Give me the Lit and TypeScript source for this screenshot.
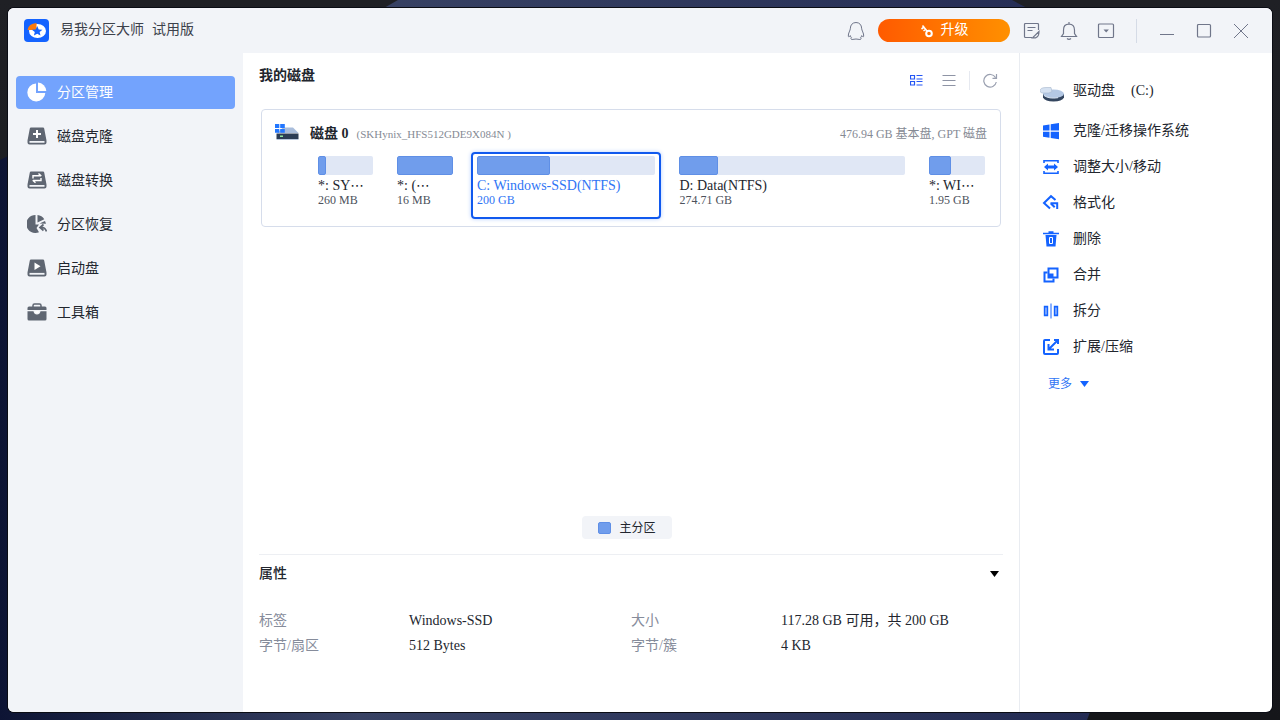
import { LitElement, html, svg, css } from "lit";
import { customElement, state } from "lit/decorators.js";
import { classMap } from "lit/directives/class-map.js";

const icon = (w: number, h: number, body: unknown) =>
  html`<svg width=${w} height=${h} viewBox="0 0 ${w} ${h}" fill="none" aria-hidden="true">${body}</svg>`;

const diskBody = svg`<path d="M4 .5h12q1 0 1.2 1l2 10.500q.3 1 .3 2v1.500q0 2-2 2H2.500q-2 0-2-2V14q0-1 .3-2l2-10.500Q3 .5 4 .5z" fill="#5f6672"/><path d="M2.500 14.800h15" stroke="#f2f4f8" stroke-width="1.800"/>`;

const navIcons: Record<string, unknown> = {
  manage: icon(20, 20, svg`<path d="M9 1.500A9 9 0 1 0 18.300 11H9z" fill="#fff"/><path d="M11 .5v8.500h8.300A9 9 0 0 0 11 .5z" fill="#fff"/>`),
  clone: icon(20, 18, svg`${diskBody}<path d="M10 3v8M6 7h8" stroke="#fff" stroke-width="2"/>`),
  convert: icon(20, 18, svg`${diskBody}<path d="M6 7.500V4.800H14M11.500 2.500L14.300 5M14 7V9.500H6M8.500 11.700L5.700 9.300" stroke="#fff" stroke-width="1.400"/>`),
  recover: icon(20, 20, svg`<path d="M8.500 1A9 9 0 1 0 12 18.200L9.500 14 12 10.500H8.500z" fill="#5f6672"/><path d="M10.500 1v7.500l6.800-3.300A9 9 0 0 0 10.500 1zM18 7l-5.500 2.600L19 9.800z" fill="#5f6672"/><path d="M16.500 10.500L13 13.500l3.500 3M13.500 13.500q4.500-.5 6 4" stroke="#5f6672" stroke-width="1.700"/>`),
  boot: icon(20, 18, svg`${diskBody}<path d="M7.500 3.500v7.500L13.500 7.200z" fill="#fff"/>`),
  tools: icon(20, 18, svg`<path d="M6 4V2.500Q6 1 7.500 1h5Q14 1 14 2.500V4" stroke="#5f6672" stroke-width="1.500"/><path d="M2 3.500h16q1.500 0 1.500 1.500v2H.5V5Q.5 3.500 2 3.500zM.5 8.200H6.500q.7 3.300 3.500 3.300t3.500-3.300h6V16q0 1.500-1.500 1.500H2Q.5 17.500.5 16z" fill="#5f6672"/><path d="M7.800 8.200h4.400q-.4 2-2.200 2t-2.200-2z" fill="#fff"/>`),
};

const B = "#1463ff";
const opIcons: Record<string, unknown> = {
  os: icon(18, 18, svg`<path d="M1 3.500l6.500-1v6H1zM8.700 2.300L17 1v7.500H8.700zM1 9.700h6.500v6l-6.500-1zM8.700 9.700H17v7.500l-8.300-1.300z" fill=${B}/>`),
  resize: icon(18, 18, svg`<path d="M2 5V2.800h14V5M2 13v2.200h14V13" stroke=${B} stroke-width="1.600"/><path d="M2 9l4-3.600v2h6v-2l4 3.600-4 3.600v-2H6v2z" fill=${B}/>`),
  format: icon(18, 18, svg`<path d="M13.500 6L9 2.200 2 9l6 5.500M8.500 9.300h6.700v5.700M8.700 9.300l4 4" stroke=${B} stroke-width="2"/>`),
  remove: icon(18, 18, svg`<path d="M1 3.500h16M6.500 2h5" stroke=${B} stroke-width="1.600"/><path d="M3.500 5h11l-1 11.500h-9z" fill=${B}/><path d="M7.500 7.500h3v6h-3z" stroke="#fff"/>`),
  merge: icon(18, 18, svg`<path d="M6.500 2.500h9v9h-9z" stroke=${B} stroke-width="2"/><path d="M5.500 6.500h-3v9h9v-3" stroke=${B} stroke-width="2"/><path d="M6.500 7.500h5v4h-5z" fill=${B}/>`),
  split: icon(18, 18, svg`<path d="M2.700 4.700h2.600v8.600H2.700zM12.700 4.700h2.600v8.600h-2.600z" stroke=${B} stroke-width="1.800"/><path d="M9 1.500v15" stroke=${B} stroke-width="1"/>`),
  extend: icon(18, 18, svg`<path d="M8 2H3Q2 2 2 3v12q0 1 1 1h12q1 0 1-1v-4M12 2h4v4" stroke=${B} stroke-width="2"/><path d="M15.500 2.500L7 11M6.500 6v5.500H12" stroke=${B} stroke-width="2"/>`),
};

const logo = icon(25, 23, svg`
  <rect width="25" height="23" rx="4" fill="#1463ff"/>
  <ellipse cx="13.500" cy="12" rx="8.500" ry="7" fill="#fff"/>
  <path d="M3.500 11Q4.500 4.500 12.500 4v7z" fill="#ff7a0a"/>
  <path d="M13.200 7l1.500 3.400 3.800.3-2.900 2.400.9 3.500-3.300-1.900-3.300 1.900.9-3.500-2.900-2.400 3.800-.3z" fill="#1463ff"/>`);

const diskIcon = icon(24, 18, svg`
  <path d="M8 4.500h10l5.500 5.500H2z" fill="#a9bddb"/><rect x="1.500" y="10.500" width="22" height="5.500" fill="#2c3d55"/>
  <path d="M1.500 16.500h22" stroke="#b9c7dc"/><path d="M5 13.300h3" stroke="#8ee8a4" stroke-width="1.500"/>
  <path d="M0 1h4.300v4H0zM5.200 1h4.600v4H5.200zM0 5.900h4.300v3.900H0zM5.200 5.900h4.600v3.900H5.200z" fill="#2377ff"/>`);

const driveIcon = icon(24, 16, svg`
  <path d="M3 8h21v3.500q-2 4-10.500 4T3 11.500z" fill="#34465f"/><ellipse cx="13.500" cy="7.700" rx="10.500" ry="4.300" fill="#b4c8e4"/>
  <path d="M4 9.500q5 3.600 14 2.200" stroke="#dce6f4"/><path d="M0 4.500Q.5 1.500 6 1.500h5l1 4-3 1.500H2Q0 6.500 0 4.500z" fill="#d5e1f1" stroke="#a6b7cd" stroke-width=".6"/>`);

const G = "#70768a";
const chrome = {
  support: icon(18, 20, svg`<path d="M9 1.500c-3.600 0-5.600 2.600-5.600 5.700 0 2.300-2.400 5-2.100 8 .1.800 1 .9 2-.6.2 1 .6 1.700 1.200 2.200-.8.500-.8 1.700.6 1.700 1.500 0 2.200-.5 3.900-.5s2.400.5 3.900.5c1.400 0 1.400-1.200.6-1.700.6-.5 1-1.200 1.200-2.200 1 1.500 1.900 1.400 2 .6.300-3-2.100-5.700-2.100-8C14.600 4.100 12.600 1.500 9 1.500z" stroke=${G}/>`),
  feedback: icon(18, 18, svg`<path d="M15.500 8V2.500q0-1-1-1h-12q-1 0-1 1v12q0 1 1 1H9M4.500 5.500h8M4.500 8.500h5" stroke=${G} stroke-width="1.200"/><path d="M16 9.500L9.500 15.800h3Q16 15 16 9.500z" stroke=${G} stroke-width="1.200"/>`),
  bell: icon(18, 20, svg`<path d="M9 1v2M1.500 15.500h15L14.500 12.500V9Q14.500 3.200 9 3.200T3.500 9v3.500zM7 17.500q2 1.800 4 0" stroke=${G} stroke-width="1.200"/>`),
  menu: icon(18, 18, svg`<rect x="1.500" y="2" width="15" height="13.500" rx="1" stroke=${G} stroke-width="1.200"/><path d="M6.500 7.500h5.400L9.200 10.500z" fill=${G}/>`),
  min: icon(18, 18, svg`<path d="M2 12.500h14" stroke=${G}/>`),
  max: icon(18, 18, svg`<rect x="2.500" y="2.500" width="13" height="12.500" rx="1" stroke=${G} stroke-width="1.200"/>`),
  close: icon(18, 18, svg`<path d="M2 2l14 14M16 2L2 16" stroke=${G}/>`),
  key: icon(14, 14, svg`<circle cx="9" cy="9.500" r="2.800" stroke="#fff" stroke-width="2"/><path d="M7.200 7.200L2.500 1.500M1.500 5l3-2.300M3.500 7l2.500-2" stroke="#fff" stroke-width="1.600"/>`),
  grid: icon(14, 14, svg`<path d="M.5 2.500h4V6h-4zM.5 8.500h4V12h-4zM6.500 2.500h6M6.500 6h6M6.500 8.500h6M6.500 12h6" stroke="#2456f5" stroke-width="1.200"/>`),
  list: icon(14, 14, svg`<path d="M.5 2.500h13M.5 7.500h13M.5 12.500h13" stroke="#8e94a5"/>`),
  refresh: icon(16, 16, svg`<path d="M13.500 5.500A6.300 6.300 0 1 0 14.300 10M14.500 2v4.300H10.500" stroke="#9aa0b0" stroke-width="1.200"/>`),
};

const NAV = [
  ["manage", "分区管理"],
  ["clone", "磁盘克隆"],
  ["convert", "磁盘转换"],
  ["recover", "分区恢复"],
  ["boot", "启动盘"],
  ["tools", "工具箱"],
];

const PARTS = [
  { name: "*: SY", cut: true, size: "260 MB", used: 15 },
  { name: "*: (", cut: true, size: "16 MB", used: 100 },
  { name: "C: Windows-SSD(NTFS)", cut: false, size: "200 GB", used: 41 },
  { name: "D: Data(NTFS)", cut: false, size: "274.71 GB", used: 17 },
  { name: "*: WI", cut: true, size: "1.95 GB", used: 39 },
];

const OPS = [
  ["os", "克隆/迁移操作系统"],
  ["resize", "调整大小/移动"],
  ["format", "格式化"],
  ["remove", "删除"],
  ["merge", "合并"],
  ["split", "拆分"],
  ["extend", "扩展/压缩"],
];

@customElement("app-root")
export class AppRoot extends LitElement {
  @state() private page = "manage";
  @state() private selected = 2;

  static styles = css`
    :host {
      display: flex;
      box-sizing: border-box;
      min-height: 100vh;
      padding: 8px;
      font: 14px/20px "Liberation Serif", "Noto Sans CJK SC", serif;
      color: #22262e;
      background:
        url("data:image/svg+xml,%3Csvg xmlns='http://www.w3.org/2000/svg' viewBox='0 0 1280 720' preserveAspectRatio='none'%3E%3Cdefs%3E%3ClinearGradient id='g'%3E%3Cstop stop-color='%230d1434'/%3E%3Cstop offset='.33' stop-color='%23384264'/%3E%3Cstop offset='1' stop-color='%23242c54'/%3E%3C/linearGradient%3E%3C/defs%3E%3Cpath d='M398 0L384 8Q200 60 0 160V720H1087L1090 712L1027 8L1012 0Z' fill='url(%23g)'/%3E%3C/svg%3E") 0 0 / 100% 100% no-repeat,
        linear-gradient(#1f2025, #15161a);
    }
    * { box-sizing: border-box; }
    button {
      font: inherit;
      color: inherit;
      background: none;
      border: 0;
      padding: 0;
      margin: 0;
      text-align: left;
      cursor: pointer;
    }
    svg { display: block; flex: none; }
    h1, h2, h3, dl, dd, dt, p, ul { margin: 0; padding: 0; font-size: 14px; }
    h1 { font-weight: 400; }
    ul { list-style: none; }
    .window {
      flex: 1;
      display: flex;
      flex-direction: column;
      border-radius: 6px;
      overflow: hidden;
      background: #fff;
      box-shadow: 0 0 0 1px #0a0c14;
    }
    .titlebar {
      display: flex;
      align-items: center;
      height: 45px;
      padding: 0 19px 0 16px;
      background: #f2f4f8;
    }
    .brand { display: flex; align-items: center; gap: 11px; flex: 1; }
    .brand h1 { display: flex; gap: 8px; padding-bottom: 2px; color: #3c414b; }
    .tools { display: flex; align-items: center; gap: 10px; }
    .controls { display: flex; align-items: center; gap: 13px; }
    .tool { width: 24px; height: 24px; display: grid; place-items: center; }
    .upgrade {
      display: flex;
      align-items: center;
      justify-content: center;
      gap: 7px;
      width: 132px;
      height: 23px;
      border-radius: 12px;
      color: #fff;
      background: linear-gradient(90deg, #ff5a00, #ff9000);
    }
    .upgrade span { padding-bottom: 2px; }
    .bar { width: 1px; height: 24px; background: #d5dbe6; }
    .controls .bar { margin: 0 5px; }
    .body { flex: 1; display: flex; }
    .side {
      width: 235px;
      padding: 23px 8px;
      background: #f2f4f8;
    }
    .side ul { display: grid; gap: 11px; }
    .nav {
      display: flex;
      align-items: center;
      gap: 10px;
      width: 100%;
      height: 33px;
      padding-left: 11px;
      border-radius: 4px;
    }
    .nav svg { margin-bottom: 2px; }
    .nav.on { background: #73a3fd; color: #fff; }
    .main {
      flex: 1;
      display: flex;
      flex-direction: column;
      padding: 13px 16px 0;
      border-right: 1px solid #e9ecf1;
    }
    .head { display: flex; justify-content: space-between; align-items: flex-start; height: 43px; }
    .views { display: flex; align-items: center; gap: 8px; padding: 2px 1px 0 0; }
    .views .bar { height: 19px; background: #e6e9f0; }
    .card {
      margin: 0 2px;
      padding: 12px 9px 7px 13px;
      border: 1px solid #d6ddeb;
      border-radius: 4px;
    }
    .disk { display: flex; align-items: center; padding-right: 4px; height: 23px; }
    .disk svg { margin-bottom: 4px; }
    .disk h3 { margin: 0 8px 0 11px; }
    .muted { flex: 1; font-size: 11px; color: #858a94; }
    .total { font-size: 12px; color: #858a94; }
    .parts {
      display: grid;
      grid-template-columns: 67px 68px 190fr 237fr 68px;
      gap: 12px;
      margin: 7px 0 0 37px;
    }
    .part {
      height: 67px;
      padding: 2px 4px;
      border: 2px solid transparent;
      border-radius: 4px;
      display: flex;
      flex-direction: column;
      white-space: nowrap;
    }
    .part.on { border-color: #1059ee; color: #2f75f5; box-shadow: 0 0 4px #b5cdff; }
    .track { height: 19px; border-radius: 2px; background: #e0e7f5; overflow: hidden; }
    .used { display: block; height: 100%; border-radius: 2px; background: #709dec; border: 1px solid #5f8fe6; }
    .name { height: 19px; line-height: 16px; padding-top: 3px; }
    .dots { font-family: "DejaVu Sans", sans-serif; line-height: 0; }
    .size { font-size: 12px; line-height: 13px; color: #4d525c; }
    .part.on .size { color: inherit; }
    .legend {
      display: flex;
      align-items: center;
      gap: 8px;
      align-self: center;
      height: 23px;
      margin: auto 8px 15px 0;
      padding: 0 16px;
      border-radius: 4px;
      font-size: 12px;
      background: #f2f4f8;
    }
    .swatch { width: 13px; height: 12px; border-radius: 2px; background: #709dec; border: 1px solid #5f8fe6; }
    .props { height: 158px; border-top: 1px solid #edeff3; padding-top: 9px; }
    .props header { display: flex; justify-content: space-between; align-items: center; padding-right: 4px; }
    .props h2 { font-weight: 500; }
    .props dl {
      display: grid;
      grid-template-columns: 150px 1fr 150px 1fr;
      row-gap: 5px;
      padding-top: 27px;
    }
    .props dt { color: #868c9b; }
    .ops { width: 252px; padding: 27px 20px; }
    .drive { display: flex; align-items: center; gap: 9px; height: 22px; }
    .drive svg { margin-top: 6px; }
    .drive h2 { display: flex; gap: 16px; font-weight: 400; }
    .ops ul { display: grid; gap: 12px; padding-top: 17px; }
    .op { display: flex; align-items: center; gap: 13px; width: 100%; height: 24px; padding-left: 2px; }
    .more { display: flex; align-items: center; gap: 8px; height: 24px; margin-top: 13px; padding-left: 8px; font-size: 12px; color: #2f75f5; }
  `;

  private tool(label: string, glyph: unknown) {
    return html`<button class="tool" type="button" aria-label=${label}>${glyph}</button>`;
  }

  render() {
    return html`
      <div class="window">
        <header class="titlebar">
          <div class="brand">${logo}<h1><span>易我分区大师</span><span>试用版</span></h1></div>
          <div class="tools">
            ${this.tool("客服", chrome.support)}
            <button class="upgrade" type="button">${chrome.key}<span>升级</span></button>
            <div class="controls">
              ${this.tool("反馈", chrome.feedback)} ${this.tool("通知", chrome.bell)} ${this.tool("菜单", chrome.menu)}
              <span class="bar"></span>
              ${this.tool("最小化", chrome.min)} ${this.tool("最大化", chrome.max)} ${this.tool("关闭", chrome.close)}
            </div>
          </div>
        </header>
        <div class="body">
          <nav class="side">
            <ul>
              ${NAV.map(([id, label]) => html`<li>
                <button type="button" class=${classMap({ nav: true, on: this.page === id })} @click=${() => (this.page = id)}>
                  ${navIcons[id]}<span>${label}</span>
                </button>
              </li>`)}
            </ul>
          </nav>
          <main class="main">
            <div class="head">
              <h2>我的磁盘</h2>
              <div class="views">
                ${this.tool("图形视图", chrome.grid)} ${this.tool("列表视图", chrome.list)}
                <span class="bar"></span>
                ${this.tool("刷新", chrome.refresh)}
              </div>
            </div>
            <section class="card">
              <div class="disk">
                ${diskIcon}
                <h3>磁盘 0</h3>
                <span class="muted">(SKHynix_HFS512GDE9X084N )</span>
                <span class="total">476.94 GB 基本盘, GPT 磁盘</span>
              </div>
              <div class="parts">
                ${PARTS.map((p, i) => html`<button type="button" class=${classMap({ part: true, on: this.selected === i })} @click=${() => (this.selected = i)}>
                  <span class="track"><span class="used" style="width:${p.used}%"></span></span>
                  <span class="name">${p.name}${p.cut ? html`<span class="dots">⋯</span>` : ""}</span>
                  <span class="size">${p.size}</span>
                </button>`)}
              </div>
            </section>
            <div class="legend"><span class="swatch"></span><span>主分区</span></div>
            <section class="props">
              <header>
                <h2>属性</h2>
                <button type="button" aria-label="收起">${icon(9, 6, svg`<path d="M0 0h9L4.500 6z" fill="#000"/>`)}</button>
              </header>
              <dl>
                <dt>标签</dt><dd>Windows-SSD</dd><dt>大小</dt><dd>117.28 GB 可用，共 200 GB</dd>
                <dt>字节/扇区</dt><dd>512 Bytes</dd><dt>字节/簇</dt><dd>4 KB</dd>
              </dl>
            </section>
          </main>
          <aside class="ops">
            <div class="drive">${driveIcon}<h2><span>驱动盘</span><span>(C:)</span></h2></div>
            <ul>
              ${OPS.map(([id, label]) => html`<li><button type="button" class="op">${opIcons[id]}<span>${label}</span></button></li>`)}
            </ul>
            <button type="button" class="more"><span>更多</span>${icon(9, 6, svg`<path d="M0 0h9L4.500 6z" fill="#1463ff"/>`)}</button>
          </aside>
        </div>
      </div>
    `;
  }
}
